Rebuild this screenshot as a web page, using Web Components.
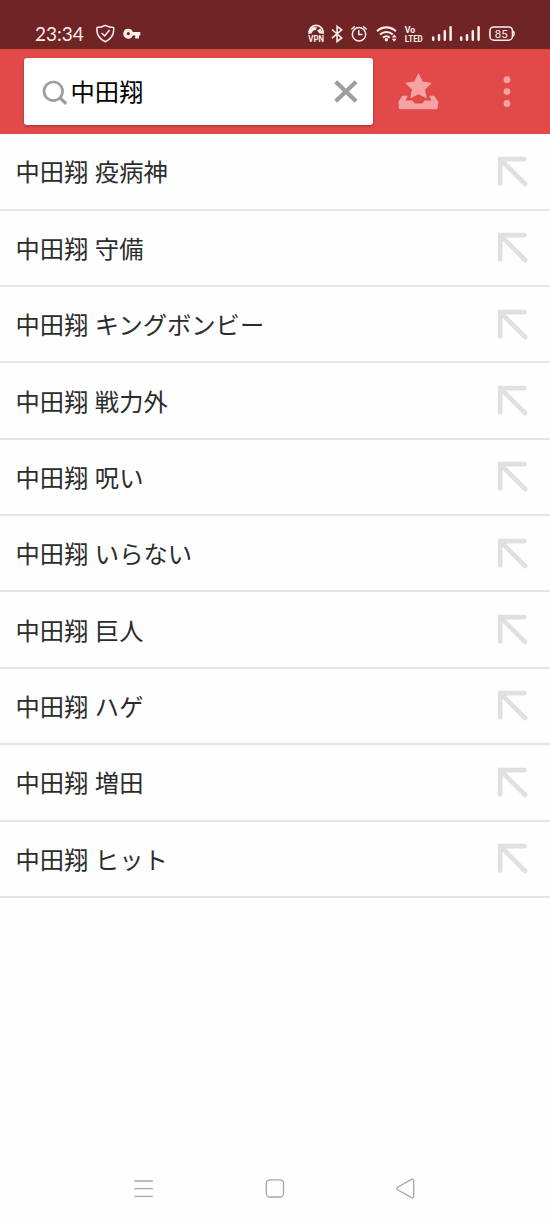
<!DOCTYPE html>
<html lang="ja">
<head>
<meta charset="utf-8">
<meta name="viewport" content="width=device-width, initial-scale=1">
<title>中田翔</title>
<style>
  body {
    margin: 0;
    background: #fefefe;
    font-family: "Noto Sans CJK JP", sans-serif;
  }
</style>
</head>
<body>
<search-screen></search-screen>

<script>
/*************************** ICONS ***************************/

const star = "M418.5 74.300l3.700 7.800 8.500 1.200-6.300 6 1.600 8.300-7.500-4.200-7.500 4.200 1.600-8.300-6.300-6 8.500-1.200z";

// viewBox units are screen pixels, so every icon draws at its natural size
const icons = {
  shield: ["95 22 20 22", `
    <path d="M105.3 25.3q4 2.1 8.3 2.2 1.2 9.8-8.3 14.3-9.5-4.500-8.300-14.300 4.300-.1 8.300-2.200z" fill="none" stroke="currentColor" stroke-width="1.500" stroke-linejoin="round"/>
    <path d="M101.600 33l3 3 5-6" fill="none" stroke="currentColor" stroke-width="1.500"/>`],
  key: ["123 22 18 22", `
    <path fill="currentColor" fill-rule="evenodd" d="M128.300 28.800a4.900 4.900 0 0 1 4.500 3.100h7.500v3.500h-1.300v3.100h-3.800v-3.100h-2.400a4.900 4.900 0 1 1-4.500-6.600zm0 3.300a1.600 1.600 0 1 0 .01 0z"/>`],
  vpn: ["307 22 18 26", `
    <path d="M309.300 34a7 7 0 1 1 13.600 0" fill="none" stroke="currentColor" stroke-width="1.700"/>
    <path d="M310 29.500l3-2.500 4 .3-1 2.500-3 1-1.500 2.700h-2.500zM317 30.500l3.500-2 2.300 5h-3.300z" fill="currentColor"/>
    <text x="308.300" y="41.500" font-size="9" font-weight="700" textLength="15.700" lengthAdjust="spacingAndGlyphs" fill="currentColor">VPN</text>`],
  bluetooth: ["330 22 14 22", `
    <path d="M332 29.500l9.700 8.400-4.600 3.600v-15.200l4.600 3.500-9.700 8.300" fill="none" stroke="currentColor" stroke-width="1.600"/>`],
  alarm: ["350 22 18 22", `
    <g fill="none" stroke="currentColor" stroke-width="1.500" stroke-linecap="round">
      <circle cx="359" cy="34.300" r="6.700"/>
      <path d="M358.800 30.500v4h3M351.800 29l2.600-2.200M366.200 29l-2.600-2.200"/>
    </g>`],
  wifi: ["376 22 22 22", `
    <g fill="none" stroke="currentColor" stroke-width="2.100">
      <path d="M377 31.200a13.500 13.500 0 0 1 18.800 0M380 34.600a9.200 9.200 0 0 1 12.800 0M383 37.700a5 5 0 0 1 6.800 0"/>
    </g>
    <circle cx="386.400" cy="39.800" r="1.700" fill="currentColor"/>
    <path d="M391.800 37.500l2.400-3 2.400 3zM391.800 38.700l2.400 3 2.400-3z" fill="currentColor"/>`],
  volte: ["404 22 20 26", `
    <g font-weight="700" fill="currentColor">
      <text x="404.800" y="33" font-size="9" textLength="10.500" lengthAdjust="spacingAndGlyphs">Vo</text>
      <text x="404.800" y="41.500" font-size="9" textLength="18" lengthAdjust="spacingAndGlyphs">LTED</text>
    </g>`],
  signal: ["431 22 22 22", `
    <path d="M433.200 39.800v-2.200M439 39.800v-4.500M444.800 39.800v-8.500M450.600 39.800v-12.500" stroke="currentColor" stroke-width="2.500" stroke-linecap="round"/>`],
  battery: ["488 22 28 22", `
    <rect x="489.900" y="27" width="22.600" height="13.200" rx="4" fill="none" stroke="currentColor" stroke-width="1.600"/>
    <path d="M513.200 31q1.800 2.600 0 5.200" fill="none" stroke="currentColor" stroke-width="1.500"/>
    <text x="501.200" y="37.800" font-size="11.500" text-anchor="middle" fill="currentColor">85</text>`],
  search: ["42 78 26 26", `
    <circle cx="53.300" cy="90.300" r="9.300" fill="none" stroke="currentColor" stroke-width="2.700"/>
    <path d="M60 97l6.200 5.700" stroke="currentColor" stroke-width="3.200"/>`],
  clear: ["333 79 26 26", `
    <path d="M335.700 81.800l20.400 19.400M356.100 81.800l-20.400 19.400" stroke="currentColor" stroke-width="4.200"/>`],
  favorites: ["398 72 42 38", `
    <path d="${star}" fill="currentColor" stroke="currentColor" stroke-width="1.200" stroke-linejoin="round"/>
    <path d="M403.500 95.700h4.300l-2.300 4.800h7l2.300 3h7.400l2.300-3h7l-2.300-4.800h4.300q1 0 1.500 1l3.300 5.300-.7 6q-.2 1.200-1.500 1.200h-35.600q-1.300 0-1.500-1.200l-.7-6 3.300-5.300q.5-1 1.500-1z" fill="currentColor"/>`],
  more: ["503 74 8 35", `
    <g fill="currentColor"><circle cx="507" cy="79.700" r="3.400"/><circle cx="507" cy="91.600" r="3.400"/><circle cx="507" cy="103.500" r="3.400"/></g>`],
  insert: ["497 156 32 32", `
    <path d="M500.200 183.500v-24.400h24.300M500.700 159.600l24.400 24.400" fill="none" stroke="currentColor" stroke-width="4.600" stroke-linecap="round"/>`],
  recents: ["133 1178 21 21", `
    <path d="M134.300 1181h18.600M134.300 1188.700h18.600M134.300 1196.300h18.600" stroke="currentColor" stroke-width="1.300"/>`],
  home: ["265 1178 20 21", `
    <rect x="266.300" y="1179.800" width="17.200" height="17.200" rx="3.500" fill="none" stroke="currentColor" stroke-width="1.300"/>`],
  back: ["395 1178 21 21", `
    <path d="M397.500 1187.200l13.500-7.600q2.700-1.300 2.700 1.500v14.800q0 2.800-2.700 1.500l-13.500-7.600q-2-1.300 0-2.600z" fill="none" stroke="currentColor" stroke-width="1.300"/>`],
};

class UiIcon extends HTMLElement {
  connectedCallback() {
    const [box, shapes] = icons[this.getAttribute("name")];
    const [, , width, height] = box.split(" ");
    this.attachShadow({ mode: "open" }).innerHTML = `
      <style>
        :host { display: block; flex: none; }
        svg { display: block; font-family: Roboto, sans-serif; }
      </style>
      <svg width="${width}" height="${height}" viewBox="${box}">${shapes}</svg>
    `;
  }
}

customElements.define("ui-icon", UiIcon);

/*************************** STATUS BAR ***************************/

class StatusBar extends HTMLElement {
  connectedCallback() {
    this.attachShadow({ mode: "open" }).innerHTML = `
      <style>
        :host {
          display: flex;
          justify-content: space-between;
          box-sizing: border-box;
          height: 49px;
          padding: 22px 34px 0 35px;
          background: #702424;
          color: #fbeeee;
        }
        .group { display: flex; }
        time {
          width: 60px;
          font: 19px/24px Lato, sans-serif;
        }
        .right ui-icon { margin-left: 6px; }
        .right ui-icon[name="bluetooth"] { margin-left: 5px; }
        .right ui-icon[name="wifi"] { margin-left: 8px; }
        .right .wide { margin-left: 7px; }
        .left ui-icon + ui-icon { margin-left: 8px; }
      </style>
      <div class="group left">
        <time>23:34</time>
        <ui-icon name="shield"></ui-icon>
        <ui-icon name="key"></ui-icon>
      </div>
      <div class="group right">
        <ui-icon name="vpn"></ui-icon>
        <ui-icon name="bluetooth"></ui-icon>
        <ui-icon name="alarm"></ui-icon>
        <ui-icon name="wifi"></ui-icon>
        <ui-icon name="volte"></ui-icon>
        <ui-icon class="wide" name="signal"></ui-icon>
        <ui-icon name="signal"></ui-icon>
        <ui-icon class="wide" name="battery"></ui-icon>
      </div>
    `;
  }
}

customElements.define("status-bar", StatusBar);

/*************************** SEARCH HEADER ***************************/

class SearchHeader extends HTMLElement {
  connectedCallback() {
    this.attachShadow({ mode: "open" }).innerHTML = `
      <style>
        :host {
          display: flex;
          align-items: flex-start;
          box-sizing: border-box;
          height: 85.3px;
          padding: 9px 39px 0 24px;
          background: #e24a4a;
          color: #f4a3a5;
        }
        .field {
          display: flex;
          align-items: center;
          box-sizing: border-box;
          width: 349px;
          height: 67px;
          padding: 0 14px 0 18px;
          border-radius: 3px;
          background: #fff;
          box-shadow: 0 1px 3px #0005;
          color: #9e9e9e;
        }
        .query {
          flex: 1;
          padding: 0 0 2px 2.5px;
          color: #000;
          font-size: 24.3px;
          line-height: 36px;
        }
        .favorites { margin: 14px 0 0 25px; }
        .more { margin: 16px 0 0 auto; }
      </style>
      <div class="field">
        <ui-icon name="search"></ui-icon>
        <span class="query"><slot></slot></span>
        <ui-icon name="clear"></ui-icon>
      </div>
      <ui-icon class="favorites" name="favorites"></ui-icon>
      <ui-icon class="more" name="more"></ui-icon>
    `;
  }
}

customElements.define("search-header", SearchHeader);

/*************************** SUGGESTIONS ***************************/

class SuggestionRow extends HTMLElement {
  connectedCallback() {
    this.attachShadow({ mode: "open" }).innerHTML = `
      <style>
        :host {
          display: flex;
          align-items: center;
          justify-content: space-between;
          box-sizing: border-box;
          height: 76.37px;
          padding: 0 21px 0 15.5px;
          border-bottom: 2px solid #e6e6e6;
          color: #2c2c2c;
          font-size: 24.3px;
          line-height: 36px;
          word-spacing: 1px;
        }
        ui-icon {
          padding-top: 1px;
          color: #e0e0e0;
        }
      </style>
      <span><slot></slot></span>
      <ui-icon name="insert"></ui-icon>
    `;
  }
}

customElements.define("suggestion-row", SuggestionRow);

/*************************** NAVIGATION BAR ***************************/

class NavBar extends HTMLElement {
  connectedCallback() {
    this.attachShadow({ mode: "open" }).innerHTML = `
      <style>
        :host {
          display: flex;
          justify-content: space-between;
          padding: 0 134px 23px 133px;
          color: #a6a6a6;
        }
      </style>
      <ui-icon name="recents"></ui-icon>
      <ui-icon name="home"></ui-icon>
      <ui-icon name="back"></ui-icon>
    `;
  }
}

customElements.define("nav-bar", NavBar);

/*************************** SCREEN ***************************/

const query = "中田翔";
const words = ["疫病神", "守備", "キングボンビー", "戦力外", "呪い", "いらない", "巨人", "ハゲ", "増田", "ヒット"];

class SearchScreen extends HTMLElement {
  connectedCallback() {
    this.attachShadow({ mode: "open" }).innerHTML = `
      <style>
        :host {
          display: flex;
          flex-direction: column;
          width: 550px;
          height: 1222px;
          overflow: hidden;
        }
        main { flex: 1; }
      </style>
      <status-bar></status-bar>
      <search-header>${query}</search-header>
      <main>
        ${words.map((word) => `<suggestion-row>${query} ${word}</suggestion-row>`).join("")}
      </main>
      <nav-bar></nav-bar>
    `;
  }
}

customElements.define("search-screen", SearchScreen);
</script>
</body>
</html>
